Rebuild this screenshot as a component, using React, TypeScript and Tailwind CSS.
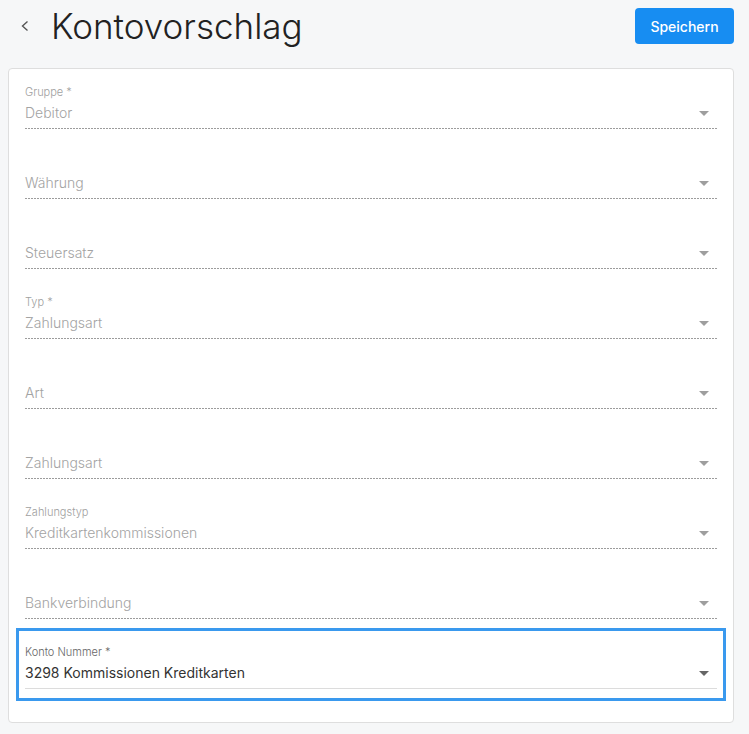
import React from 'react';

interface FieldProps {
  label?: string;
  value: string;
  active?: boolean;
}

const fields: FieldProps[] = [
  { label: 'Gruppe *', value: 'Debitor' },
  { value: 'Währung' },
  { value: 'Steuersatz' },
  { label: 'Typ *', value: 'Zahlungsart' },
  { value: 'Art' },
  { value: 'Zahlungsart' },
  { label: 'Zahlungstyp', value: 'Kreditkartenkommissionen' },
  { value: 'Bankverbindung' },
];

function Caret({ dark }: { dark?: boolean }) {
  return (
    <svg width="10" height="5" viewBox="0 0 10 5" className="shrink-0">
      <path d="M0 0 L10 0 L5 5 Z" fill={dark ? '#666666' : '#9e9e9e'} />
    </svg>
  );
}

function SelectField({ label, value, active }: FieldProps) {
  return (
    <div className="flex flex-col">
      <span
        className={`h-[14px] text-[11px] leading-[14px] font-light ${active ? 'text-[#666]' : 'text-[#a0a0a0]'}`}
      >
        {label ?? ''}
      </span>
      <div className="mt-[4px] mb-[5px] flex h-[20px] items-center justify-between pr-[8px]">
        <span
          className={`text-[14px] leading-[20px] ${active ? 'font-normal text-[#333]' : 'font-light text-[#a3a3a3]'}`}
        >
          {value}
        </span>
        <Caret dark={active} />
      </div>
      {active ? (
        <div className="h-px bg-[#dcdcdc]" />
      ) : (
        <div className="h-px bg-[repeating-linear-gradient(90deg,#9c9c9c_0_2px,transparent_2px_3px)]" />
      )}
    </div>
  );
}

export default function App() {
  return (
    <div
      className="min-h-[734px] bg-[#f6f7f8] pb-[11px]"
      style={{ fontFamily: 'Inter, "Noto Sans", sans-serif' }}
    >
      {/* header */}
      <div className="flex items-center justify-between pt-[8px] pr-[15px] pl-[20px]">
        <div className="flex items-center">
          <svg width="10" height="12" viewBox="0 0 10 12" className="mr-[21px]">
            <path d="M7.5 1.5 L2.5 6 L7.5 10.5" fill="none" stroke="#555" strokeWidth="1.4" />
          </svg>
          <h1 className="text-[35px] leading-[36px] font-light text-[#222]">Kontovorschlag</h1>
        </div>
        <button className="h-[36px] w-[99px] rounded-[4px] bg-[#178df2] text-[14px] font-medium text-white">
          Speichern
        </button>
      </div>

      {/* card */}
      <div className="mx-[8px] mt-[24px] w-[726px] rounded-[4px] border border-[#dedede] bg-white pt-[16px] pb-[21px]">
        <div className="flex flex-col px-[16px]">
          {fields.map((f, i) => (
            <div key={i} className={i === 0 ? '' : 'mt-[26px]'}>
              <SelectField {...f} />
            </div>
          ))}
          <div className="-mx-[9px] mt-[9px] border-[3px] border-[#3a99ee] px-[6px] pt-[14px] pb-[9px]">
            <SelectField label="Konto Nummer *" value="3298 Kommissionen Kreditkarten" active />
          </div>
        </div>
      </div>
    </div>
  );
}
